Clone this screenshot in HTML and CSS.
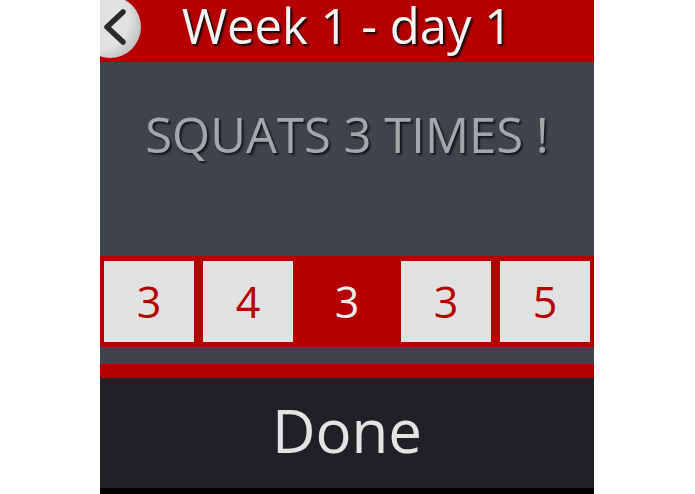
FILE: index.html
```html
<!DOCTYPE html>
<html>
<head>
<meta charset="utf-8">
<link rel="stylesheet" href="styles.css">
</head>
<body>
<div class="screen">
  <header class="header">
    <div class="back">
      <svg width="62" height="62" viewBox="0 0 62 62">
        <defs>
          <radialGradient id="g" cx="0.35" cy="0.4" r="0.65">
            <stop offset="0.7" stop-color="#e2e2e2"/>
            <stop offset="1" stop-color="#c4c4c4"/>
          </radialGradient>
        </defs>
        <circle cx="10" cy="27" r="31" fill="url(#g)"/>
        <path d="M23 12 L7 27 L23 42" fill="none" stroke="#2b2b2b" stroke-width="5.5" stroke-linecap="round" stroke-linejoin="round"/>
      </svg>
    </div>
    <h1 class="title">Week 1 - day 1</h1>
  </header>
  <section class="panel">
    <p class="exercise">SQUATS 3 TIMES !</p>
  </section>
  <section class="reps">
    <div class="rep">3</div>
    <div class="rep">4</div>
    <div class="rep active">3</div>
    <div class="rep">3</div>
    <div class="rep">5</div>
  </section>
  <div class="spacer"></div>
  <div class="redbar"></div>
  <button class="done">Done</button>
  <div class="bottom"></div>
</div>
</body>
</html>
```

FILE: styles.css
```css
html, body {
  margin: 0;
  padding: 0;
  background: #ffffff;
}
body {
  font-family: "Open Sans", "Noto Sans", sans-serif;
}
.screen {
  margin-left: 100px;
  width: 494px;
  display: flex;
  flex-direction: column;
}
.header {
  position: relative;
  height: 62px;
  background: #b40000;
  display: flex;
  align-items: flex-start;
  justify-content: center;
}
.back {
  position: absolute;
  left: 0;
  top: 0;
  width: 62px;
  height: 62px;
}
.back svg {
  display: block;
}
.title {
  margin: 0;
  font-weight: 400;
  font-size: 49px;
  line-height: 50px;
  color: #f4f4f4;
  text-shadow: 2px 2px 2px #140a0a;
}
.panel {
  height: 194px;
  background: #3f434b;
  display: flex;
  align-items: flex-start;
  justify-content: center;
}
.exercise {
  margin: 0;
  padding-top: 37px;
  font-size: 49px;
  line-height: 70px;
  color: #a4a6aa;
  text-shadow: 2px 2px 2px #15171b;
}
.reps {
  height: 91px;
  box-sizing: border-box;
  padding: 5px 4px;
  background: #b40000;
  display: flex;
  gap: 9px;
}
.rep {
  flex: 1;
  background: #e1e1e1;
  color: #b40000;
  font-size: 43px;
  display: flex;
  align-items: center;
  justify-content: center;
}
.rep.active {
  background: #b40000;
  color: #ececec;
}
.spacer {
  height: 17px;
  background: #3f434b;
}
.redbar {
  height: 14px;
  background: #b40000;
}
.done {
  height: 110px;
  box-sizing: border-box;
  border: none;
  margin: 0;
  padding: 0 0 6px 0;
  background: #202125;
  color: #e4e4e4;
  font-family: "Open Sans", "Noto Sans", sans-serif;
  font-size: 60px;
  line-height: 104px;
}
.bottom {
  height: 6px;
  background: #000000;
}
```
